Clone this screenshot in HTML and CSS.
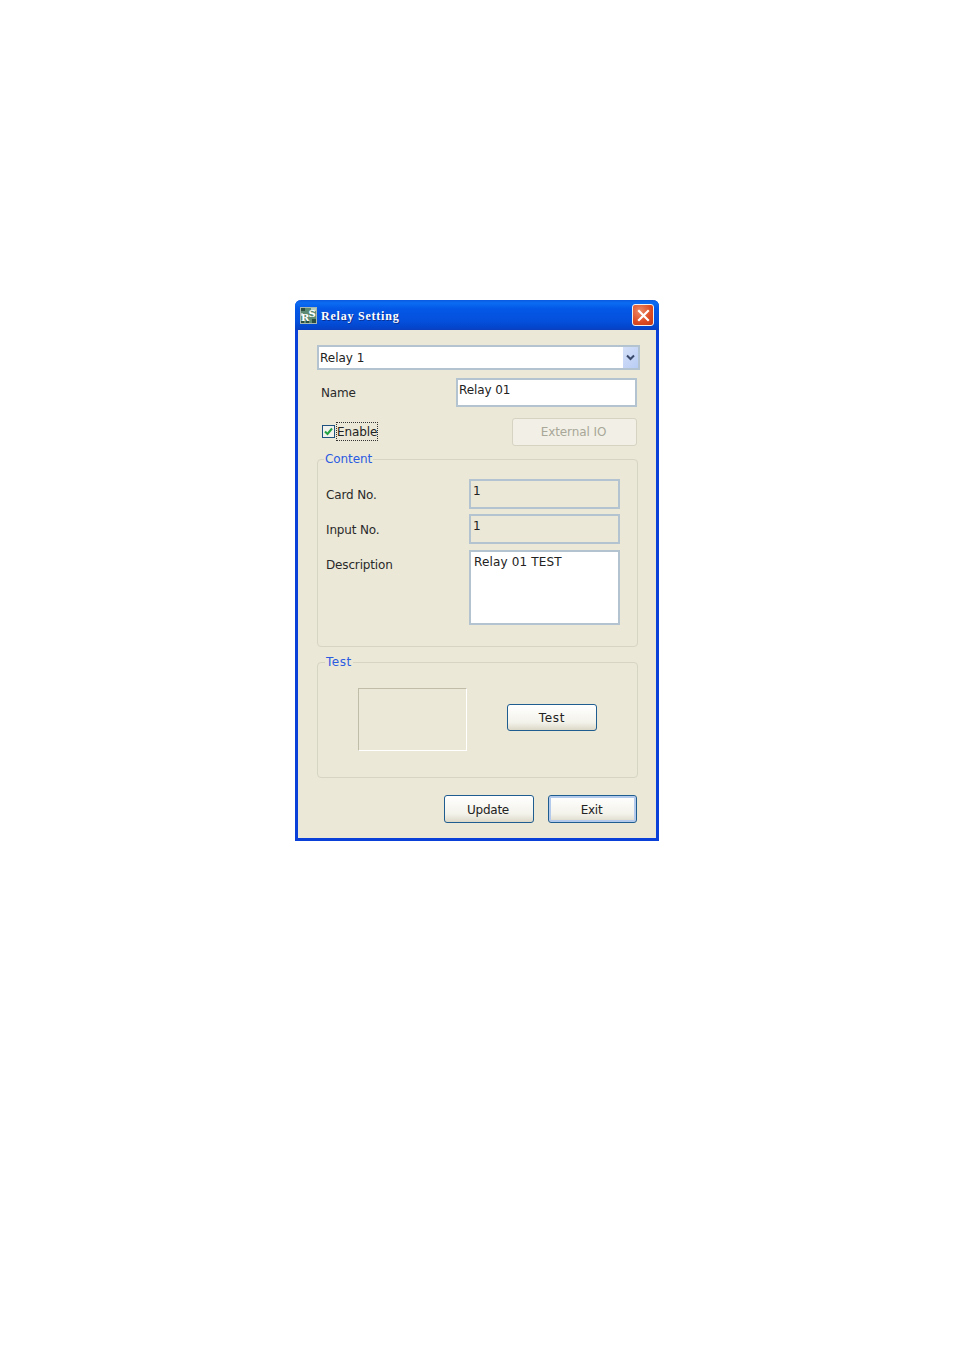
FILE: index.html
```html
<!DOCTYPE html>
<html lang="en">
<head>
<meta charset="utf-8">
<title>Relay Setting</title>
<link rel="stylesheet" href="styles.css">
</head>
<body>
<main class="window">
  <header class="titlebar">
    <svg class="app-icon" width="17" height="17" viewBox="0 0 17 17">
      <rect x="0.5" y="0.5" width="16" height="16" fill="#5d8a72" stroke="#a9b8ae"/>
      <path d="M1 1h4v3H1zM12 12h4v4h-4zM1 14h3v2H1zM6 13h3v3H6z" fill="#2c4f42"/>
      <path d="M11 1h5v3h-5zM1 6h2v3H1z" fill="#b9cdbf"/>
      <text x="1" y="14" class="icon-text">R</text>
      <text x="8.5" y="10" class="icon-text">S</text>
    </svg>
    <span class="title">Relay Setting</span>
    <button class="close" aria-label="Close">
      <svg width="13" height="13" viewBox="0 0 13 13"><path d="M2 2l9 9M11 2l-9 9" stroke="#fff" stroke-width="2.2" stroke-linecap="square"/></svg>
    </button>
  </header>
  <div class="content">
    <div class="combo">
      <span class="combo-value">Relay 1</span>
      <span class="combo-arrow"><svg width="9" height="7" viewBox="0 0 9 7"><path d="M1 1.5l3.5 3.5L8 1.5" fill="none" stroke="#3a4a6a" stroke-width="2"/></svg></span>
    </div>
    <div class="row name-row">
      <span class="label name-label">Name</span>
      <div class="field name-field">Relay 01</div>
    </div>
    <div class="row enable-row">
      <span class="check"><svg width="11" height="11" viewBox="0 0 11 11"><path d="M2 5.5l2.5 2.5L9 2.5" fill="none" stroke="#22a243" stroke-width="2"/></svg></span>
      <span class="check-label">Enable</span>
      <button class="btn ext-btn" disabled>External IO</button>
    </div>
    <fieldset class="group content-group">
      <legend>Content</legend>
      <div class="form-row">
        <span class="label">Card No.</span>
        <div class="field readonly">1</div>
      </div>
      <div class="form-row">
        <span class="label">Input No.</span>
        <div class="field readonly">1</div>
      </div>
      <div class="form-row desc-row">
        <span class="label">Description</span>
        <div class="field desc">Relay 01 TEST</div>
      </div>
    </fieldset>
    <fieldset class="group test-group">
      <legend>Test</legend>
      <div class="sunken"></div>
      <button class="btn test-btn">Test</button>
    </fieldset>
    <div class="actions">
      <button class="btn">Update</button>
      <button class="btn default">Exit</button>
    </div>
  </div>
</main>
</body>
</html>
```
FILE: styles.css
```css
* { box-sizing: border-box; }
html, body { margin: 0; background: #fff; }
body { height: 1350px; padding: 300px 0 0 295px; font: 12px/15px "DejaVu Sans", sans-serif; color: #222; }
.window {
  width: 364px; height: 541px; background: #ebe8d8;
  border: solid #0a3fd8; border-width: 0 3px 3px;
  border-radius: 6px 6px 0 0; display: flex; flex-direction: column;
}
.titlebar {
  height: 30px; margin: 0 -3px; padding: 0 5px 0 5px; display: flex; align-items: center;
  border-radius: 6px 6px 0 0;
  background: linear-gradient(#0a5ae0 0, #0a6cf2 10%, #0457e6 30%, #0450dc 70%, #0346cd 90%, #0a3fc0 100%);
}
.app-icon { flex: none; }
.icon-text { font: bold 10px "DejaVu Serif", serif; fill: #fff; }
.title {
  margin-left: 4px; padding-top: 2px; font: bold 12px/15px "Liberation Serif", serif; color: #fff; letter-spacing: .78px;
  text-shadow: 1px 1px 0 #0a2f90; flex: 1;
}
.close {
  width: 22px; height: 22px; padding: 0; display: flex; align-items: center; justify-content: center;
  border: 1px solid #f4f0ec; border-radius: 3px;
  background: radial-gradient(circle at 35% 30%, #ec8a68, #dc4a22 60%, #c23a16);
}
.content { flex: 1; padding: 15px 0 0 19px; display: flex; flex-direction: column; }
.combo {
  width: 323px; height: 25px; background: #fff; border: 2px solid #b3c3d0; display: flex; align-items: center; justify-content: space-between;
}
.combo-value { padding: 2px 0 0 1px; }
.combo-arrow {
  width: 15px; height: 21px; background: linear-gradient(135deg, #d5e0f8, #b8ccf4);
  display: flex; align-items: center; justify-content: center;
}
.row { display: flex; }
.label { letter-spacing: -.15px; color: #2a2a2a; }
.field { border: 2px solid #b3c3d0; background: #fff; }
.name-row { margin-top: 8px; width: 320px; height: 29px; align-items: center; }
.name-label { margin-left: 4px; width: 135px; padding-top: 1px; }
.name-field { width: 181px; height: 29px; padding: 3px 1px; letter-spacing: -.1px; }
.enable-row { margin-top: 11px; width: 320px; height: 27px; align-items: center; }
.check {
  margin-left: 5px; width: 13px; height: 13px; border: 1px solid #1c5180; background: #f2f2ec;
  display: flex; align-items: center; justify-content: center;
}
.check-label { margin-left: 1px; border: 1px dotted #333; letter-spacing: -.1px; line-height: 16px; padding-top: 1px; }
.btn {
  width: 90px; height: 28px; padding: 2px 2px 0 0; font: 12px/15px "DejaVu Sans", sans-serif; letter-spacing: -.25px; color: #222;
  border: 1.5px solid #1f5c8f; border-radius: 3px;
  background: linear-gradient(#fff, #f3f2ea 70%, #dcd8c8);
}
.btn.default { width: 89px; box-shadow: inset 0 0 0 2px #b4caec; }
.ext-btn {
  margin-left: auto; width: 125px; color: #a8a798; letter-spacing: -.1px; border: 1px solid #d6d3c2; background: #f2f0e6;
}
.group {
  margin: 0; width: 321px; padding: 0; border: 1px solid #d6d4c2; border-radius: 4px; min-width: 0;
}
.group legend { padding: 0 1px; color: #2b5be0; letter-spacing: -.1px; line-height: 15px; }
.content-group { margin-top: 7px; height: 195px; padding: 12px 17px 0 8px; }
.content-group legend { margin-left: -2px; }
.form-row { display: flex; height: 30px; margin-bottom: 5px; align-items: flex-start; }
.form-row .label { width: 144px; padding-top: 9px; }
.readonly { width: 151px; height: 30px; background: #ebe8d8; padding: 3px 2px; flex: none; }
.desc-row { height: 75px; margin: 6px 0 0; }
.desc-row .label { padding-top: 8px; }
.desc { width: 151px; height: 75px; padding: 3px 3px; letter-spacing: .15px; flex: none; }
.test-group { margin-top: 8px; height: 123px; display: flex; padding: 18px 0 0 40px; }
.test-group legend { margin-left: -33px; letter-spacing: .5px; }
.sunken {
  width: 109px; height: 63px; border: 1px solid; border-color: #c0bca8 #fff #fff #c0bca8;
}
.test-btn { margin: 16px 0 0 40px; height: 27px; padding-right: 0; letter-spacing: .7px; }
.actions { margin-top: 17px; width: 320px; display: flex; justify-content: flex-end; gap: 14px; }
```
